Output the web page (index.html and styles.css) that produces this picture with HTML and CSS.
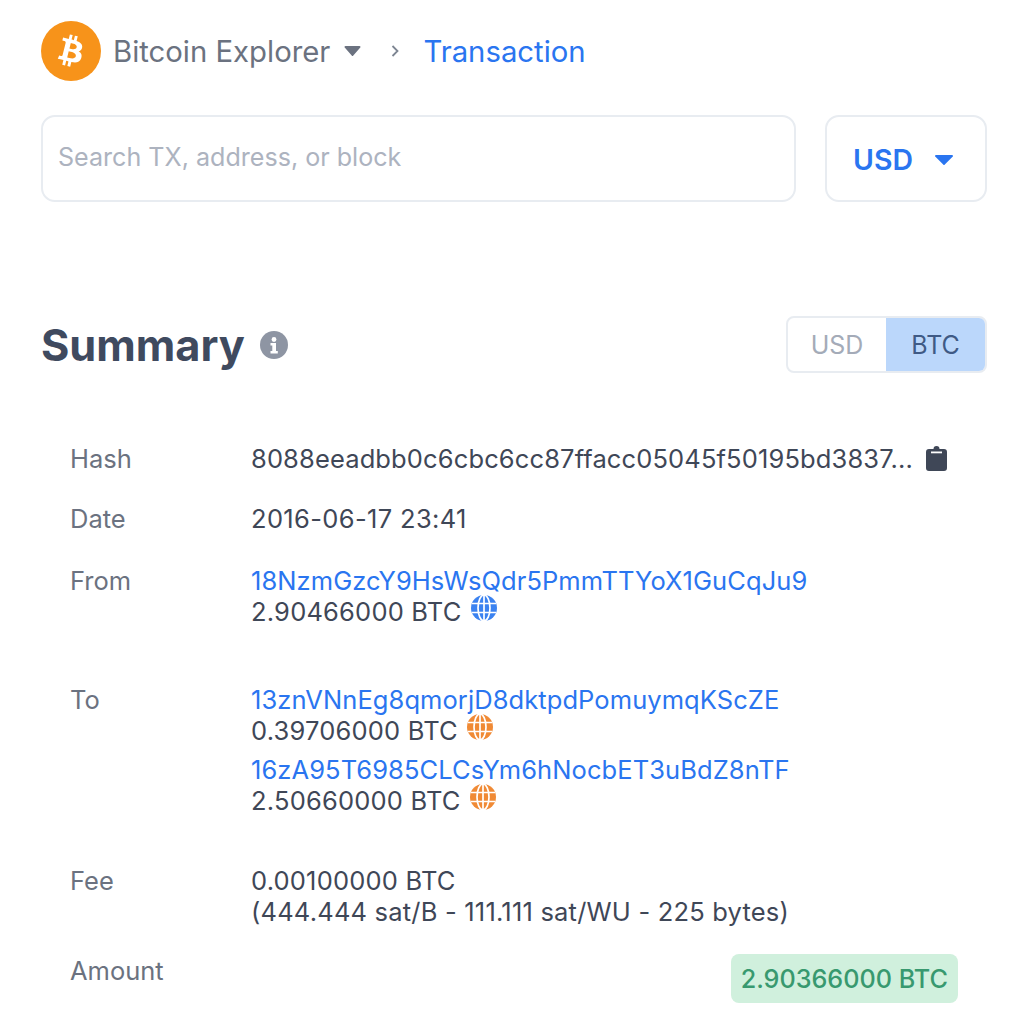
FILE: index.html
```html
<!DOCTYPE html>
<html lang="en">
<head>
<meta charset="UTF-8">
<title>Transaction - Bitcoin Explorer</title>
<link rel="stylesheet" href="styles.css">
</head>
<body>
  <nav class="breadcrumb">
    <svg class="logo" viewBox="0 0 24 24" width="60" height="60">
      <circle cx="12" cy="12" r="12" fill="#f7931a"/>
      <path fill="#fff" transform="translate(12 12) scale(.85) translate(-12 -12)" d="M17.27 10.29c.24-1.59-.974-2.45-2.64-3.03l.54-2.153-1.315-.33-.525 2.107c-.345-.087-.705-.167-1.064-.25l.526-2.127-1.32-.33-.54 2.165c-.285-.067-.565-.132-.84-.2l-1.815-.45-.35 1.407s.975.225.955.236c.535.136.63.486.615.766l-1.477 5.92c-.075.166-.24.406-.614.314.015.02-.96-.24-.96-.24l-.66 1.51 1.71.426.93.242-.54 2.19 1.32.327.54-2.17c.36.1.705.19 1.05.273l-.51 2.154 1.32.33.545-2.19c2.24.427 3.93.257 4.64-1.774.57-1.637-.03-2.58-1.217-3.196.854-.193 1.5-.76 1.68-1.93h.01zm-3.01 4.22c-.404 1.64-3.157.75-4.05.53l.72-2.9c.896.23 3.757.67 3.33 2.37zm.41-4.24c-.37 1.49-2.662.735-3.405.55l.654-2.64c.744.18 3.137.524 2.75 2.084v.006z"/>
    </svg>
    <span class="crumb">Bitcoin Explorer</span>
    <svg class="caret" viewBox="0 0 16 10" width="17" height="10"><path d="M1 0h14a1 1 0 0 1 .8 1.6L8.8 9.6a1 1 0 0 1-1.6 0L.2 1.6A1 1 0 0 1 1 0z" fill="#6b7280"/></svg>
    <svg class="chevron" viewBox="0 0 10 16" width="10" height="16"><path d="M2.5 3l5 5-5 5" fill="none" stroke="#7d8592" stroke-width="1.8"/></svg>
    <a class="crumb-current">Transaction</a>
  </nav>

  <div class="search-row">
    <div class="search-box">Search TX, address, or block</div>
    <div class="currency-select">
      USD
      <svg viewBox="0 0 18 10" width="18" height="10"><path d="M1 0h16a1 1 0 0 1 .8 1.6L9.8 9.6a1 1 0 0 1-1.6 0L.2 1.6A1 1 0 0 1 1 0z" fill="#2a75f0"/></svg>
    </div>
  </div>

  <div class="summary-head">
    <h1>Summary</h1>
    <svg class="info" viewBox="0 0 28 28" width="28" height="28">
      <circle cx="14" cy="14" r="14" fill="#8e95a3"/>
      <circle cx="14" cy="8.5" r="2.4" fill="#fff"/>
      <path d="M10.5 12h5.5v8h1.8v2.6h-7.3V20h1.8v-5.4h-1.8z" fill="#fff"/>
    </svg>
    <div class="toggle">
      <span class="toggle-item">USD</span>
      <span class="toggle-item active">BTC</span>
    </div>
  </div>

  <div class="details">
    <div class="row row-hash">
      <div class="label">Hash</div>
      <div class="value hash">
        <span>8088eeadbb0c6cbc6cc87ffacc05045f50195bd3837...</span>
        <svg viewBox="0 0 21 25" width="21" height="25">
          <path fill="#3f4757" d="M3 3h4.5a3 3 0 0 1 6 0H18a3 3 0 0 1 3 3v16a3 3 0 0 1-3 3H3a3 3 0 0 1-3-3V6a3 3 0 0 1 3-3z"/>
          <rect x="5" y="5.5" width="11" height="1.8" fill="#fff"/>
        </svg>
      </div>
    </div>
    <div class="row row-date">
      <div class="label">Date</div>
      <div class="value">2016-06-17 23:41</div>
    </div>
    <div class="row row-from">
      <div class="label">From</div>
      <div class="value">
        <a>18NzmGzcY9HsWsQdr5PmmTTYoX1GuCqJu9</a>
        <div class="amount">2.90466000 BTC
          <svg class="globe blue" viewBox="0 0 26 26" width="26" height="26"><use href="#globe"/></svg>
        </div>
      </div>
    </div>
    <div class="row row-to">
      <div class="label">To</div>
      <div class="value">
        <div class="output">
          <a>13znVNnEg8qmorjD8dktpdPomuymqKScZE</a>
          <div class="amount">0.39706000 BTC
            <svg class="globe orange" viewBox="0 0 26 26" width="26" height="26"><use href="#globe"/></svg>
          </div>
        </div>
        <div class="output">
          <a>16zA95T6985CLCsYm6hNocbET3uBdZ8nTF</a>
          <div class="amount">2.50660000 BTC
            <svg class="globe orange" viewBox="0 0 26 26" width="26" height="26"><use href="#globe"/></svg>
          </div>
        </div>
      </div>
    </div>
    <div class="row row-fee">
      <div class="label">Fee</div>
      <div class="value">
        <div>0.00100000 BTC</div>
        <div>(444.444 sat/B - 111.111 sat/WU - 225 bytes)</div>
      </div>
    </div>
    <div class="row row-total">
      <div class="label">Amount</div>
      <div class="value total"><span class="badge">2.90366000 BTC</span></div>
    </div>
  </div>

  <svg class="defs" width="0" height="0">
    <symbol id="globe" viewBox="0 0 26 26">
      <circle cx="13" cy="13" r="13" fill="currentColor"/>
      <g fill="none" stroke="#fff" stroke-width="1.7">
        <ellipse cx="13" cy="13" rx="6" ry="13"/>
        <path d="M13 0v26M1 8.5h24M1 17.5h24"/>
      </g>
    </symbol>
  </svg>
</body>
</html>
```

FILE: styles.css
```css
body {
  margin: 0;
  padding: 21px 37px 0 41px;
  font-family: Inter, "Liberation Sans", sans-serif;
  background-color: #fff;
  color: #3f4757;
  overflow: hidden;
}
a {
  color: #2a75f0;
}
.defs {
  position: absolute;
}
.breadcrumb {
  display: flex;
  align-items: center;
  height: 60px;
}
.logo {
  margin-right: 12px;
}
.crumb {
  font-size: 29.3px;
  color: #6b7280;
}
.caret {
  margin-left: 14px;
}
.chevron {
  margin-left: 29px;
  margin-right: 23px;
}
.crumb-current {
  font-size: 29.3px;
  color: #2a75f0;
}
.search-row {
  display: flex;
  gap: 29px;
  margin-top: 34px;
}
.search-box {
  flex-grow: 1;
  height: 87px;
  box-sizing: border-box;
  padding: 0 15px 4px;
  display: flex;
  align-items: center;
  border: 2px solid #e8ecf1;
  border-radius: 14px;
  font-size: 25.1px;
  color: #adb3bf;
}
.currency-select {
  width: 162px;
  height: 87px;
  box-sizing: border-box;
  padding: 2px 6px 0 0;
  display: flex;
  align-items: center;
  justify-content: center;
  gap: 22px;
  border: 2px solid #e8ecf1;
  border-radius: 14px;
  font-size: 28.4px;
  font-weight: 600;
  color: #2a75f0;
}
.summary-head {
  display: flex;
  align-items: center;
  margin-top: 114px;
  height: 57px;
}
.summary-head h1 {
  margin: 0;
  font-size: 43.3px;
  font-weight: 700;
  color: #3f4a5f;
}
.info {
  margin-left: 15px;
}
.toggle {
  margin-left: auto;
  display: flex;
  height: 57px;
  box-sizing: border-box;
  border: 2px solid #e8ecf1;
  border-radius: 8px;
  overflow: hidden;
  font-size: 25px;
}
.toggle-item {
  width: 98px;
  display: flex;
  align-items: center;
  justify-content: center;
  color: #a4abb8;
}
.toggle-item.active {
  width: 99px;
  background-color: #bbd7fb;
  color: #3f5a85;
}
.details {
  margin-top: 71px;
  padding: 0 29px;
  font-size: 25.5px;
  line-height: 30.5px;
}
.row {
  display: grid;
  grid-template-columns: 181px 1fr;
}
.label {
  color: #6b7280;
}
.value {
  letter-spacing: 0.2px;
}
.value a {
  letter-spacing: 0.08px;
}
.row-date {
  margin-top: 29px;
}
.row-date .value {
  letter-spacing: 0.35px;
}
.row-from {
  margin-top: 32px;
}
.row-to {
  margin-top: 58px;
}
.row-fee {
  margin-top: 50px;
}
.row-total {
  margin-top: 29px;
}
.hash {
  display: flex;
  align-items: center;
  justify-content: space-between;
  padding-right: 11px;
  letter-spacing: 0.13px;
}
.hash svg {
  margin-bottom: 2px;
}
.amount {
  height: 30.5px;
}
.output + .output {
  margin-top: 9px;
}
.globe {
  vertical-align: 0;
  margin: -4px 0 0 2px;
}
.globe.blue {
  color: #3b82f0;
}
.globe.orange {
  color: #f08a35;
}
.total {
  text-align: right;
}
.badge {
  display: inline-block;
  margin-top: -2px;
  padding: 10px 10px 8.5px;
  background-color: #d0f0dd;
  border-radius: 8px;
  color: #38996f;
  font-size: 25.2px;
  font-weight: 500;
  letter-spacing: 0;
}
```
